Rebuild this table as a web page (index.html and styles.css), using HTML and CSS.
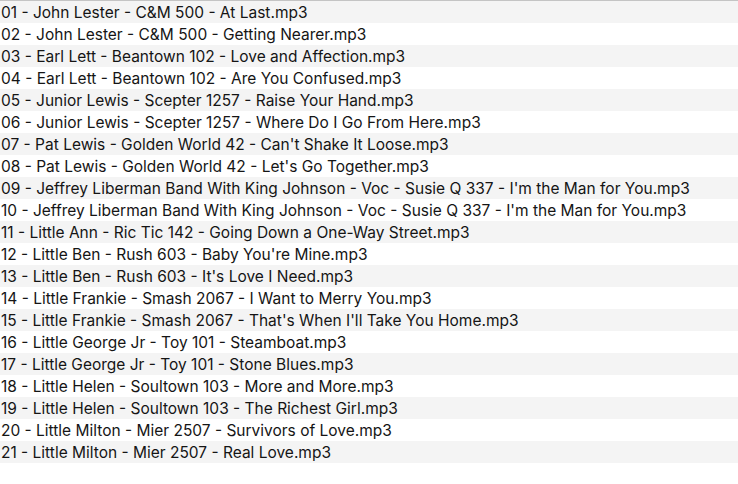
FILE: index.html
```html
<!DOCTYPE html>
<html>
<head>
<meta charset="utf-8">
<link rel="stylesheet" href="styles.css">
</head>
<body>
<div class="list">
<div class="row">01 - John Lester - C&amp;M 500 - At Last.mp3</div>
<div class="row">02 - John Lester - C&amp;M 500 - Getting Nearer.mp3</div>
<div class="row">03 - Earl Lett - Beantown 102 - Love and Affection.mp3</div>
<div class="row">04 - Earl Lett - Beantown 102 - Are You Confused.mp3</div>
<div class="row">05 - Junior Lewis - Scepter 1257 - Raise Your Hand.mp3</div>
<div class="row">06 - Junior Lewis - Scepter 1257 - Where Do I Go From Here.mp3</div>
<div class="row">07 - Pat Lewis - Golden World 42 - Can't Shake It Loose.mp3</div>
<div class="row">08 - Pat Lewis - Golden World 42 - Let's Go Together.mp3</div>
<div class="row">09 - Jeffrey Liberman Band With King Johnson - Voc - Susie Q 337 - I'm the Man for You.mp3</div>
<div class="row">10 - Jeffrey Liberman Band With King Johnson - Voc - Susie Q 337 - I'm the Man for You.mp3</div>
<div class="row">11 - Little Ann - Ric Tic 142 - Going Down a One-Way Street.mp3</div>
<div class="row">12 - Little Ben - Rush 603 - Baby You're Mine.mp3</div>
<div class="row">13 - Little Ben - Rush 603 - It's Love I Need.mp3</div>
<div class="row">14 - Little Frankie - Smash 2067 - I Want to Merry You.mp3</div>
<div class="row">15 - Little Frankie - Smash 2067 - That's When I'll Take You Home.mp3</div>
<div class="row">16 - Little George Jr - Toy 101 - Steamboat.mp3</div>
<div class="row">17 - Little George Jr - Toy 101 - Stone Blues.mp3</div>
<div class="row">18 - Little Helen - Soultown 103 - More and More.mp3</div>
<div class="row">19 - Little Helen - Soultown 103 - The Richest Girl.mp3</div>
<div class="row">20 - Little Milton - Mier 2507 - Survivors of Love.mp3</div>
<div class="row">21 - Little Milton - Mier 2507 - Real Love.mp3</div>
</div>
</body>
</html>
```
FILE: styles.css
```css
html, body {
  margin: 0;
  padding: 0;
  background: #ffffff;
}
.list {
  border-top: 1px solid #c4c4c4;
  font-family: Inter, "Noto Sans", sans-serif;
  font-size: 15.5px;
  color: #151515;
}
.row {
  height: 22px;
  line-height: 23px;
  padding-left: 1px;
  white-space: nowrap;
}
.row:nth-child(odd) {
  background: #f4f4f4;
}
```
